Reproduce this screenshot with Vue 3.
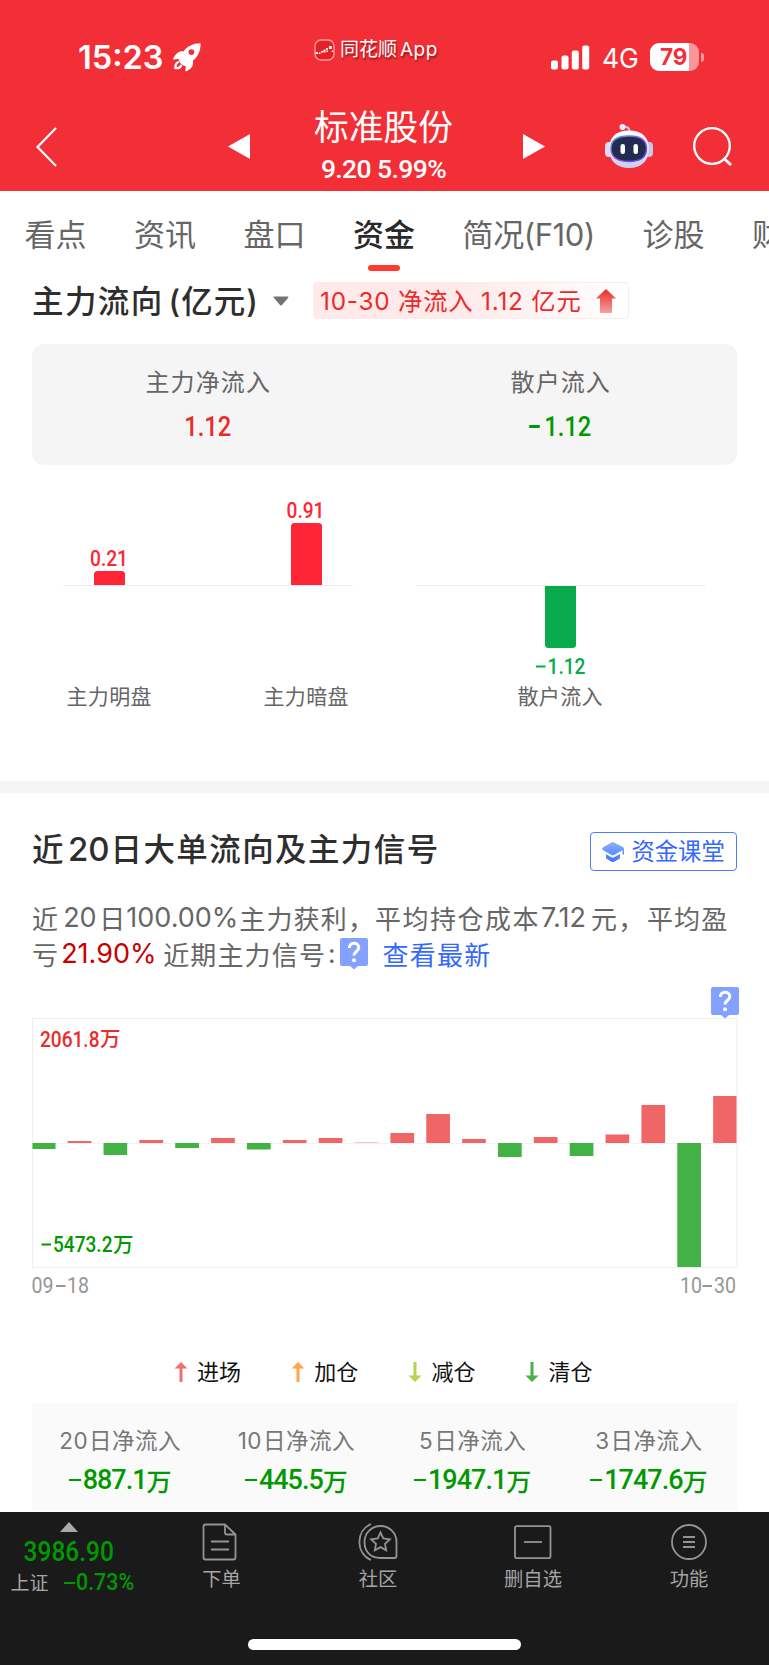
<script setup>
const tabs = [
  { label: '看点' },
  { label: '资讯' },
  { label: '盘口' },
  { label: '资金', active: true },
  { label: '简况(F10)', wide: true },
  { label: '诊股' },
  { label: '财务' },
]

// Heights in chart pixels; positive grows upward from the zero line
const flows = [-6, 2, -12, 3, -5, 5, -6.5, 3, 5, 1, 10, 29, 4, -14, 6, -13, 8.5, 38, -124, 47]
const bars = flows.map((v, i) => {
  const x = Math.max(0.5, i * 35.86 - 0.2)
  const right = Math.min(704.5, i * 35.86 + 23.5)
  return {
    x,
    w: right - x,
    y: v > 0 ? 125 - v : 125,
    h: Math.abs(v),
    fill: v > 0 ? '#f06667' : '#43b244',
    faint: v === 1,
  }
})

const legend = [
  { label: '进场', color: '#f1706f', up: true },
  { label: '加仓', color: '#ffa450', up: true },
  { label: '减仓', color: '#b3d552', up: false },
  { label: '清仓', color: '#45b445', up: false },
]

const sums = [
  { days: '20', value: '887.1' },
  { days: '10', value: '445.5' },
  { days: '5', value: '1947.1' },
  { days: '3', value: '1747.6' },
]
</script>

<template>
  <div class="page">
    <header class="top">
      <div class="status">
        <span class="time">15:23</span>
        <svg class="rocket" width="30" height="30" viewBox="0 0 30 30">
          <path fill="#fff" fill-rule="evenodd" d="M28.5 1.2C21.5 1 15.5 4 11.4 9.4 7.8 8.6 4.4 10.4 1.2 16.4c-.4.8.2 1.2 1 1l4.2-.7 1.4 3.8 2.6 2.6 3.6 1.4-.7 3.8c-.1.9.6 1.2 1.3.9 5.6-2.6 7.4-6.6 6.2-10.4C25.9 15 29 8.2 28.5 1.2ZM19.4 7.2a2.9 2.9 0 1 1 0 5.8 2.9 2.9 0 0 1 0-5.8Z" />
          <path fill="none" stroke="#fff" stroke-width="2.3" stroke-linecap="round" stroke-linejoin="round" d="M6 20.2c-2 .8-2.7 3.3-2.6 6 2.3.1 4.7-.5 5.6-2.5" />
        </svg>
        <div class="app-return">
          <svg width="21" height="22" viewBox="0 0 21 22">
            <rect x="1" y="1" width="19" height="20" rx="6" fill="#e52028" stroke="#f99" stroke-width="1.4" />
            <g fill="#fff">
              <rect x="1.5" y="13" width="2.5" height="2" /><rect x="5" y="13.500" width="1.500" height="1.500" />
              <rect x="7" y="12" width="2" height="1.500" /><rect x="9.500" y="10.500" width="2" height="3" />
              <rect x="12" y="9" width="1.800" height="1.800" /><rect x="12.500" y="11.500" width="1.500" height="1.500" />
              <rect x="15" y="7" width="2.800" height="3" /><rect x="17.800" y="11.500" width="1.500" height="1.500" />
            </g>
          </svg>
          <span class="app-name">同花顺<i>App</i></span>
        </div>
        <svg class="signal" width="39" height="26" viewBox="0 0 39 26" fill="#fff">
          <rect x="0" y="15.500" width="7" height="9" rx="2" />
          <rect x="10.500" y="10.500" width="7" height="14" rx="2" />
          <rect x="20.800" y="5.500" width="7" height="19" rx="2" />
          <rect x="31.200" y="0.500" width="7" height="24" rx="2" />
        </svg>
        <span class="net">4G</span>
        <div class="battery"><b>79</b></div>
        <i class="battery-tip"></i>
      </div>
      <div class="nav">
        <svg class="back" width="24" height="42" viewBox="0 0 24 42"><path d="M22 2 3.500 21 22 40" fill="none" stroke="#fff" stroke-width="2.200" /></svg>
        <svg class="prev" width="22" height="25" viewBox="0 0 22 25"><path d="M0 12.500 22 0v25Z" fill="#fff" /></svg>
        <div class="stock">
          <div class="stock-name">标准股份</div>
          <div class="stock-price">9.20 5.99%</div>
        </div>
        <svg class="next" width="22" height="25" viewBox="0 0 22 25"><path d="M22 12.500 0 0v25Z" fill="#fff" /></svg>
        <svg class="robot" width="48" height="46" viewBox="0 0 48 46">
          <defs>
            <linearGradient id="shell" x1="0" y1="0" x2="0" y2="1"><stop offset="0" stop-color="#fff" /><stop offset="1" stop-color="#c9cdf0" /></linearGradient>
            <linearGradient id="rim" x1="0" y1="0" x2="1" y2="1"><stop offset="0" stop-color="#3fa4d8" /><stop offset=".5" stop-color="#9a4be0" /><stop offset="1" stop-color="#5a49ee" /></linearGradient>
          </defs>
          <path d="M17 4.500c4-2 7.500 0 7.500 4" fill="none" stroke="#c4c6ea" stroke-width="2" />
          <circle cx="17.500" cy="4" r="3" fill="#eceafa" />
          <rect x="0" y="19" width="8" height="15" rx="4" fill="#dcdcf5" />
          <rect x="40" y="19" width="8" height="15" rx="4" fill="#c3c7ef" />
          <path d="M24 7.500c13 0 20 7 20 18.500 0 12-8 19-20 19S4 38 4 26C4 14.500 11 7.500 24 7.500Z" fill="url(#shell)" />
          <path d="M24 13c12 0 17.500 4 17.500 12.500S36 38.500 24 38.500 6 34 6 25.500 12 13 24 13Z" fill="#222c50" stroke="url(#rim)" stroke-width="1.400" />
          <rect x="15.500" y="21" width="4.500" height="10" rx="2.200" fill="#fff" />
          <rect x="28.500" y="21" width="4.500" height="10" rx="2.200" fill="#fff" />
        </svg>
        <svg class="search" width="42" height="42" viewBox="0 0 42 42" fill="none" stroke="#fff" stroke-width="2.300">
          <circle cx="20" cy="20" r="17.800" /><path d="m31.500 32 7.500 7" stroke-width="2.800" />
        </svg>
      </div>
    </header>

    <nav class="tabs">
      <span v-for="t in tabs" :key="t.label" class="tab" :class="{ active: t.active, wide: t.wide }">{{ t.label }}</span>
    </nav>

    <section class="flow">
      <div class="flow-head">
        <h2>主力流向<span class="unit">(亿元)</span></h2>
        <svg class="caret" width="16" height="10" viewBox="0 0 16 10"><path d="M1 .5h14q1 .5 0 1.500L9 9q-1 1-2 0L1 2Q0 1 1 .5Z" fill="#737373" /></svg>
        <div class="tag">
          <span>10-30 净流入 1.12 亿元</span>
          <svg width="20" height="24" viewBox="0 0 20 24">
            <defs><linearGradient id="rise" x1="0" y1="0" x2="0" y2="1"><stop offset="0" stop-color="#e92b2b" /><stop offset="1" stop-color="#f7a0a0" /></linearGradient></defs>
            <path d="M10 0 20 9.500h-4V23q0 1-1 1H5q-1 0-1-1V9.500H0Z" fill="url(#rise)" />
          </svg>
        </div>
      </div>

      <div class="card">
        <div class="card-col"><span class="card-label">主力净流入</span><span class="card-value red">1.12</span></div>
        <div class="card-col"><span class="card-label">散户流入</span><span class="card-value green"><i class="minus"></i>1.12</span></div>
      </div>

      <svg class="mini-chart" width="705" height="240" viewBox="32 480 705 240">
        <path d="M63 585.500h290M415.500 585.500h290" stroke="#ececec" />
        <path d="M94 585v-10.500q0-3.500 3.500-3.500h24q3.500 0 3.500 3.500V585Z" fill="#ff2436" />
        <path d="M291 585v-58.500q0-3.500 3.500-3.500h24q3.500 0 3.500 3.500V585Z" fill="#ff2436" />
        <path d="M545 586v58.500q0 3.500 3.500 3.500h24q3.500 0 3.500-3.500V586Z" fill="#08ab4b" />
        <g class="din" font-size="21.500" font-weight="500">
          <text x="90" y="565.500" textLength="38" lengthAdjust="spacingAndGlyphs" fill="#ff2436">0.21</text>
          <text x="286.500" y="517.500" textLength="38" lengthAdjust="spacingAndGlyphs" fill="#ff2436">0.91</text>
          <text x="547.500" y="673.500" textLength="38" lengthAdjust="spacingAndGlyphs" fill="#08ab4b">1.12</text>
        </g>
        <path d="M536 666.500h9.500" stroke="#08ab4b" stroke-width="2" />
        <g class="cjk" font-size="21" fill="#666">
          <text x="66.500" y="704" textLength="85">主力明盘</text>
          <text x="263.500" y="704" textLength="85">主力暗盘</text>
          <text x="517.500" y="704" textLength="85">散户流入</text>
        </g>
      </svg>
    </section>

    <div class="divider"></div>

    <section class="orders">
      <div class="orders-head">
        <h2>近<span class="n20">20</span>日大单流向及主力信号</h2>
        <a class="course">
          <svg width="22" height="20" viewBox="0 0 22 20">
            <defs><linearGradient id="cap" x1="0" y1="0" x2="0" y2="1"><stop offset="0" stop-color="#8db0ff" /><stop offset="1" stop-color="#3f75f7" /></linearGradient></defs>
            <path d="M9.500.4q1.300-.6 2.600 0L20.800 5q1.200.8 1.200 2v5.500h-1.500V8.200L12 13q-1.200.6-2.400 0L.8 8Q-.5 7 .8 5.500ZM4 12l5.500 3.200q1.300.6 2.600 0L18 12v3.500q0 1-1 1.500l-5 2.700q-1.200.5-2.400 0L5 17q-1-.5-1-1.500Z" fill="url(#cap)" />
          </svg>
          <span>资金课堂</span>
        </a>
      </div>

      <div class="summary">
        <div class="line">
          近<span class="lat a">20</span>日<span class="lat b">100.00%</span>主力获利，<span class="cost">平均持仓成本</span><span class="lat c">7.12</span>元，<span class="avg">平均盈</span>
        </div>
        <div class="line">
          亏<span class="lat loss">21.90%</span>近期主力信号<span class="colon">:</span>
          <svg class="help" width="28" height="32" viewBox="0 0 28 32"><path d="M2 0h24q2 0 2 2v24q0 2-2 2h-8l-4 3.500L10 28H2q-2 0-2-2V2Q0 0 2 0Z" fill="#85a1ff" /><path d="M9.300 10c0-6.500 9.500-6 9.500-.5 0 4-4.800 4-4.800 8" fill="none" stroke="#fff" stroke-width="3" /><circle cx="14" cy="22.200" r="2" fill="#fff" /></svg>
          <a class="latest">查看最新</a>
        </div>
      </div>

      <div class="help-row">
        <svg class="help" width="28" height="32" viewBox="0 0 28 32"><path d="M2 0h24q2 0 2 2v24q0 2-2 2h-8l-4 3.500L10 28H2q-2 0-2-2V2Q0 0 2 0Z" fill="#85a1ff" /><path d="M9.300 10c0-6.500 9.500-6 9.500-.5 0 4-4.800 4-4.800 8" fill="none" stroke="#fff" stroke-width="3" /><circle cx="14" cy="22.200" r="2" fill="#fff" /></svg>
      </div>
      <svg class="chart" width="706" height="250" viewBox="0 0 706 250">
        <rect x=".5" y=".5" width="704.500" height="249" fill="none" stroke="#efefef" />
        <path d="M0 125.500h690" stroke="#f3f3f3" />
        <rect v-for="(b, i) in bars" :key="i" :x="b.x" :y="b.y" :width="b.w" :height="b.h" :fill="b.fill" :opacity="b.faint ? 0.4 : 1" />
        <g font-size="21.500" font-weight="500">
          <text class="din" x="8" y="28.500" textLength="59.500" lengthAdjust="spacingAndGlyphs" fill="#e92b2b">2061.8</text>
          <text class="cjk" x="68" y="28" font-size="20.500" fill="#e92b2b">万</text>
          <path d="M9.500 226.500h9.500" stroke="#090" stroke-width="2" />
          <text class="din" x="21" y="234" textLength="59.500" lengthAdjust="spacingAndGlyphs" fill="#090">5473.2</text>
          <text class="cjk" x="81" y="233.500" font-size="20.500" fill="#090">万</text>
        </g>
      </svg>
      <svg class="dates" width="706" height="36" viewBox="0 0 706 36">
        <g class="din" font-size="21.500" fill="#969696">
          <text x="-.5" y="25" textLength="22" lengthAdjust="spacingAndGlyphs">09</text>
          <text x="35" y="25" textLength="22" lengthAdjust="spacingAndGlyphs">18</text>
          <text x="648" y="25" textLength="22" lengthAdjust="spacingAndGlyphs">10</text>
          <text x="682" y="25" textLength="22" lengthAdjust="spacingAndGlyphs">30</text>
        </g>
        <path d="M24 18h9.500M670.500 18h9.500" stroke="#969696" stroke-width="1.800" />
      </svg>

      <div class="legend">
        <span v-for="l in legend" :key="l.label" class="legend-item">
          <svg width="12" height="20" viewBox="0 0 12 20"><path :transform="l.up ? '' : 'rotate(180 6 10)'" d="M6 0 12.500 6.500H7.500V20h-3V6.500h-5Z" :fill="l.color" /></svg>
          {{ l.label }}
        </span>
      </div>

      <div class="sums">
        <div v-for="s in sums" :key="s.days" class="sum">
          <div class="sum-label"><span class="days">{{ s.days }}</span>日净流入</div>
          <div class="sum-value"><i class="minus"></i><span class="sum-num">{{ s.value }}</span><span class="wan">万</span></div>
        </div>
      </div>
    </section>

    <footer class="dock">
      <div class="dock-row">
        <div class="index">
          <svg width="18" height="10" viewBox="0 0 18 10"><path d="M9 0 18 10H0Z" fill="#aaa" /></svg>
          <div class="index-value">3986.90</div>
          <div class="index-line"><span class="index-name">上证</span><i class="minus"></i><span class="index-pct">0.73%</span></div>
        </div>
        <div class="dock-item order">
          <svg width="40" height="40" viewBox="0 0 40 40" fill="none" stroke="#949494" stroke-width="1.800"><path d="M25 2.500H5.500q-2 0-2 2v31q0 2 2 2h28q2 0 2-2V12.500ZM25 2.500v8q0 2 2 2h8.500M11 19.500h18M11 27.500h18" /></svg>
          <span>下单</span>
        </div>
        <div class="dock-item social">
          <svg width="40" height="40" viewBox="0 0 40 40" fill="none" stroke="#949494" stroke-width="1.800">
            <path d="M22.500 36C12 36 6.500 29 6.500 20S13.500 4 22.500 4s16 7 16 16v14q0 2-2 2Z" />
            <path d="M13 2C-2.500 9-2.500 31 13 38" />
            <path d="m22.500 10.500 2.800 6 6.500.8-4.800 4.500 1.200 6.400-5.700-3.100-5.700 3.100 1.200-6.400-4.800-4.500 6.500-.8Z" />
          </svg>
          <span>社区</span>
        </div>
        <div class="dock-item remove">
          <svg width="40" height="40" viewBox="0 0 40 40" fill="none" stroke="#949494" stroke-width="1.800"><rect x="2" y="4.200" width="35.500" height="32" rx="1.500" /><path d="M11 20h18" /></svg>
          <span>删自选</span>
        </div>
        <div class="dock-item more">
          <svg width="40" height="40" viewBox="0 0 40 40" fill="none" stroke="#949494" stroke-width="1.800"><circle cx="20" cy="20" r="17" /><path d="M14 15h12M14 20h12M14 25h12" /></svg>
          <span>功能</span>
        </div>
      </div>
      <div class="home"></div>
    </footer>
  </div>
</template>

<style>
body { background: #fff; }
</style>

<style scoped>
.page {
  width: 769px; height: 1665px; overflow: hidden; display: flex; flex-direction: column; background: #fff;
  font-family: Inter, "Noto Sans CJK SC", sans-serif; color: #333; white-space: nowrap;
}
.page * { box-sizing: border-box; flex-shrink: 0; }
svg { display: block; overflow: visible; }
i { font-style: normal; }
h2 { margin: 0; font-size: 31.500px; font-weight: 500; line-height: 40px; color: #2e2e2e; letter-spacing: 1.400px; }
.din { font-family: Roboto, "Noto Sans CJK SC", sans-serif; }
.cjk { font-family: "Noto Sans CJK SC", sans-serif; }
.red { color: #e92b2b; }
.green { color: #090; }
.minus { display: inline-block; width: 12px; height: 2.500px; background: currentColor; }

.top { height: 191px; background: #f22f37; color: #fff; display: flex; flex-direction: column; }
.status { height: 100px; padding: 16px 0 16px 78px; display: flex; align-items: center; }
.time { width: 94px; padding-top: 16px; font-size: 32.500px; font-weight: 600; line-height: 40px; }
.rocket { margin-top: 14px; }
.app-return { margin: 0 0 0 112px; display: flex; align-items: center; gap: 5px; width: 237px; }
.app-name { font-size: 19px; line-height: 24px; text-shadow: 1px 2px 2px rgba(110, 0, 0, .65); }
.app-name i { margin-left: 3px; letter-spacing: .5px; }
.signal { margin-top: 15px; }
.net { width: 60px; padding: 16px 0 0 12px; font-size: 26.500px; line-height: 32px; }
.battery {
  margin-top: 14px; width: 49px; height: 28px; border-radius: 9px; color: #f22f37; line-height: 28px; padding-left: 10px;
  background: linear-gradient(90deg, #fff 39px, #f9979b 39px);
}
.battery b { font-size: 22.500px; font-weight: 700; }
.battery-tip { margin: 14px 0 0 2px; width: 3px; height: 9px; border-radius: 0 4px 4px 0; background: #f9979b; }
.nav { height: 91px; display: flex; align-items: flex-start; padding-left: 34px; }
.back { margin-top: 26px; }
.prev { margin: 34px 0 0 170px; }
.stock { width: 273px; padding-right: 6px; text-align: center; }
.stock-name { padding-top: 5px; font-size: 34.700px; line-height: 44px; }
.stock-price { margin-top: 5px; font: 500 26.500px/30px Roboto, sans-serif; letter-spacing: -.6px; }
.next { margin-top: 34px; }
.robot { margin: 23px 0 0 60px; }
.search { margin: 26px 0 0 39px; }

.tabs { height: 82px; padding: 18px 0 0 24.500px; display: flex; gap: 47.500px; overflow: hidden; }
.tab { width: 62px; font-size: 31px; line-height: 52px; color: #666; display: flex; flex-direction: column; align-items: center; }
.tab.wide { width: 132.500px; letter-spacing: -.4px; }
.tab.active { color: #2a2a2a; font-weight: 500; }
.tab.active::after { content: ""; margin-top: 4px; width: 32px; height: 6px; border-radius: 3px; background: #ff3a30; }

.flow { height: 508px; padding: 0 32px; display: flex; flex-direction: column; }
.flow-head { height: 70.500px; display: flex; align-items: flex-start; }
.flow-head h2 { width: 241px; padding-top: 8.500px; }
.unit { margin-left: 5px; letter-spacing: 1px; }
.caret { margin-top: 23px; }
.tag {
  margin: 9px 0 0 24px; width: 316px; height: 37px; padding-left: 6px; display: flex; align-items: center;
  border: 1px solid #fdeaea; border-radius: 4px; background: linear-gradient(90deg, #ffe9e9 45%, #fff);
}
.tag span { width: 276px; margin-top: -2px; font-size: 24.300px; color: #e92b2b; letter-spacing: .8px; }
.card { height: 121.500px; border-radius: 12px; background: #f5f5f5; display: flex; }
.card-col { flex: 1; display: flex; flex-direction: column; align-items: center; }
.card-label { padding-top: 22px; font-size: 24px; line-height: 34px; letter-spacing: 1.100px; color: #666; }
.card-value { margin-top: 11px; font: 500 27px/32px Roboto, sans-serif; display: flex; align-items: center; transform: scaleX(.88); }
.card-value .minus { margin-right: 5px; }
.mini-chart { margin-top: 15px; }
.divider { height: 12px; background: #f5f5f5; }

.orders { height: 719px; padding: 0 32px; display: flex; flex-direction: column; }
.orders-head { height: 108px; display: flex; align-items: flex-start; justify-content: space-between; }
.orders-head h2 { padding-top: 36px; }
.n20 { margin: 0 1px 0 3px; letter-spacing: 0; font-size: 33px; }
.course {
  margin-top: 39px; width: 147px; height: 39px; padding-left: 11px; display: flex; align-items: center; gap: 7.500px;
  border: 1.500px solid #4c7dff; border-radius: 4px; color: #3468ff; font-size: 23.300px;
}
.course span { margin-top: -3px; }
.summary { height: 86px; }
.line { position: relative; top: -1px; display: flex; align-items: center; height: 35.500px; font-size: 26px; letter-spacing: 1.150px; color: #666; }
.line .help { position: relative; top: 1px; }
.lat { letter-spacing: 0; font-size: 27px; }
.a { width: 36px; margin-left: 4px; }
.b { width: 113px; }
.cost { letter-spacing: 1.500px; }
.c { width: 50px; margin-left: 1px; }
.avg { margin-left: 1.500px; }
.loss { width: 102px; margin-left: 2px; color: #c90000; }
.colon { width: 14px; padding-left: 2px; }
.latest { margin-left: 14.500px; color: #3468ff; letter-spacing: 1.200px; }
.help-row { height: 31px; display: flex; justify-content: flex-end; margin-right: -2px; }
.help-row .help { position: relative; z-index: 1; }
.chart { width: 706px; margin-left: -.5px; }
.legend { height: 99px; padding: 52px 0 15px 142.500px; display: flex; gap: 51px; align-items: center; }
.legend-item { width: 66.200px; display: flex; align-items: center; gap: 10.500px; font-size: 22px; line-height: 30px; color: #111; }
.sums { height: 108px; background: #fafafa; display: flex; }
.sum { flex: 1; text-align: center; }
.sum-label { padding-top: 21px; font-size: 22.500px; line-height: 34px; color: #777; letter-spacing: .5px; }
.days { margin-right: 1px; }
.sum-value { margin-top: 5px; height: 34px; display: flex; align-items: center; justify-content: center; color: #090; font: 500 27px/34px Roboto, sans-serif; }
.sum-value .minus { margin-right: 2px; }
.sum-num { letter-spacing: -1px; }
.wan { font: 500 25px/34px "Noto Sans CJK SC", sans-serif; margin-top: -1px; }

.dock { height: 153px; background: #1a1a1a; color: #a5a5a5; display: flex; flex-direction: column; align-items: center; }
.dock-row { width: 769px; height: 127px; display: flex; }
.index { width: 137px; padding-top: 10px; display: flex; flex-direction: column; align-items: center; color: #090; }
.index-value { margin-top: 4px; font: 500 27.500px/32px Roboto, sans-serif; transform: scaleX(.89); }
.index-line { width: 137px; padding-left: 10.500px; display: flex; align-items: center; height: 30px; }
.index-name { width: 53px; margin-top: -3px; font-size: 19px; color: #a5a5a5; }
.index-line .minus { width: 11px; height: 2px; }
.index-pct { font: 500 23px/30px Roboto, sans-serif; margin-left: 1px; transform: scaleX(.93); transform-origin: 0 50%; }
.dock-item { width: 60px; padding-top: 10px; display: flex; flex-direction: column; align-items: center; font-size: 19.300px; line-height: 28px; }
.dock-item span { margin-top: 3px; }
.order { margin-left: 53px; }
.order span { margin-left: 3px; }
.social { margin-left: 98px; }
.remove { margin-left: 95px; }
.more { margin-left: 96px; }
.home { width: 273px; height: 10.500px; border-radius: 6px; background: #fff; }
</style>
